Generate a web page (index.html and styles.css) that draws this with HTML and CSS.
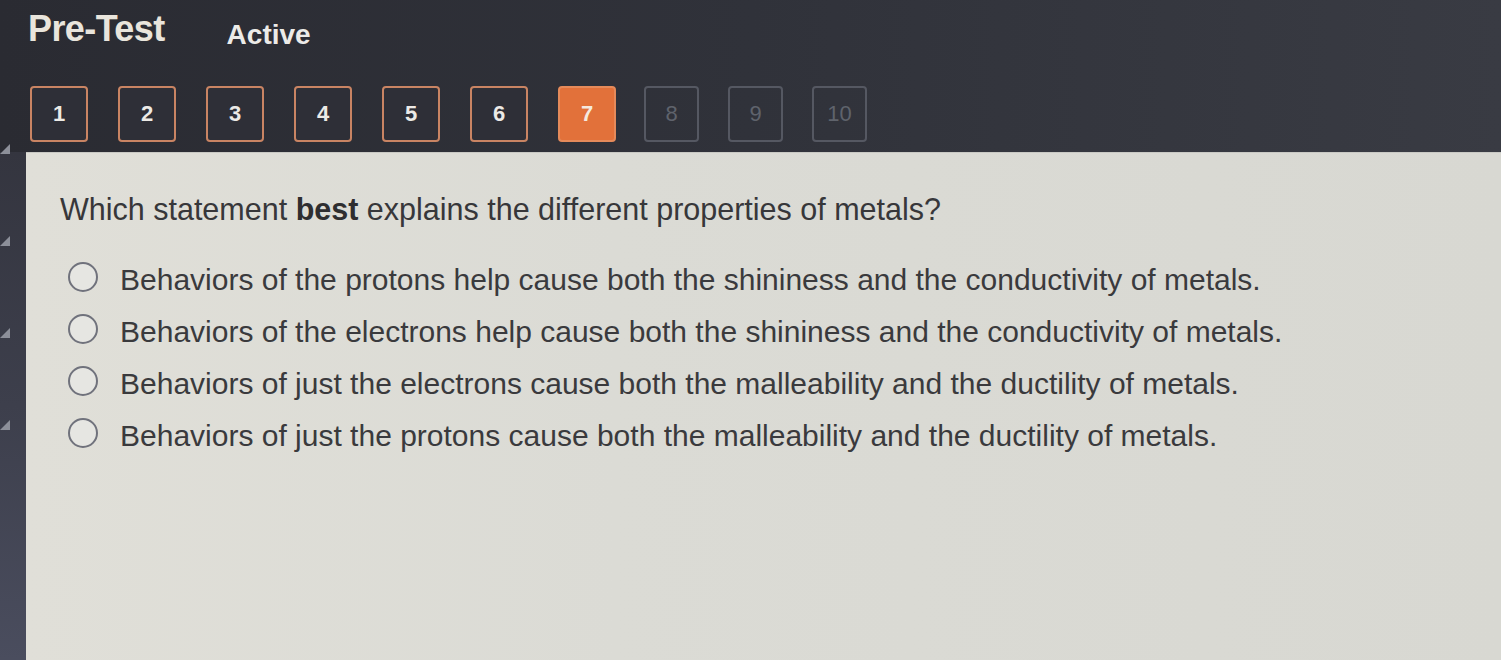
FILE: index.html
```html
<!DOCTYPE html>
<html lang="en">
<head>
<meta charset="utf-8">
<title>Pre-Test</title>
<link rel="stylesheet" href="styles.css">
</head>
<body>
<div class="page">
  <header class="header">
    <div class="title-row">
      <h1 class="title">Pre-Test</h1>
      <span class="status">Active</span>
    </div>
    <nav class="qnav">
      <span class="qbox done">1</span>
      <span class="qbox done">2</span>
      <span class="qbox done">3</span>
      <span class="qbox done">4</span>
      <span class="qbox done">5</span>
      <span class="qbox done">6</span>
      <span class="qbox current">7</span>
      <span class="qbox todo">8</span>
      <span class="qbox todo">9</span>
      <span class="qbox todo">10</span>
    </nav>
  </header>
  <div class="body-row">
    <aside class="rail">
      <span class="tick"></span>
      <span class="tick"></span>
      <span class="tick"></span>
      <span class="tick"></span>
    </aside>
    <main class="panel">
      <p class="question">Which statement <b>best</b> explains the different properties of metals?</p>
      <ul class="options">
        <li class="option"><span class="radio"></span><span>Behaviors of the protons help cause both the shininess and the conductivity of metals.</span></li>
        <li class="option"><span class="radio"></span><span>Behaviors of the electrons help cause both the shininess and the conductivity of metals.</span></li>
        <li class="option"><span class="radio"></span><span>Behaviors of just the electrons cause both the malleability and the ductility of metals.</span></li>
        <li class="option"><span class="radio"></span><span>Behaviors of just the protons cause both the malleability and the ductility of metals.</span></li>
      </ul>
    </main>
  </div>
</div>
</body>
</html>
```

FILE: styles.css
```css
html, body {
  margin: 0;
  padding: 0;
  height: 100%;
}
body {
  background: #2d2e36;
  font-family: "Liberation Sans", Arial, sans-serif;
  overflow: hidden;
}
.page {
  display: flex;
  flex-direction: column;
  height: 660px;
}
.header {
  height: 152px;
  box-sizing: border-box;
  padding: 8px 0 0 28px;
  background: linear-gradient(90deg, #2a2b32 0%, #30323a 50%, #393b43 100%);
  display: flex;
  flex-direction: column;
}
.title-row {
  display: flex;
  align-items: baseline;
  gap: 62px;
  height: 46px;
}
.title {
  margin: 0;
  font-size: 36px;
  font-weight: bold;
  color: #e9e5dc;
  letter-spacing: -0.6px;
}
.status {
  font-size: 28px;
  font-weight: bold;
  color: #ecebe8;
  position: relative;
  top: 3px;
}
.qnav {
  display: flex;
  gap: 30px;
  margin-top: 32px;
  padding-left: 2px;
}
.qbox {
  width: 58px;
  height: 56px;
  box-sizing: border-box;
  border: 2px solid #c98463;
  border-radius: 4px;
  display: flex;
  align-items: center;
  justify-content: center;
  font-size: 22px;
  font-weight: bold;
  color: #eceae6;
  background: #2e2f37;
}
.qbox.current {
  background: #e2713a;
  border-color: #e58a5a;
  color: #f5e9df;
}
.qbox.todo {
  border-color: #555862;
  color: #5f636c;
  font-weight: normal;
  width: 55px;
  background: transparent;
  margin-left: -2px;
}
.qbox.todo + .qbox.todo {
  margin-left: -1px;
}
.body-row {
  flex: 1;
  display: flex;
}
.rail {
  width: 26px;
  flex-shrink: 0;
  background: linear-gradient(180deg, #34353f 0%, #3d3f4c 50%, #4a4d5e 100%);
  display: flex;
  flex-direction: column;
  gap: 82px;
}
.tick {
  display: block;
  width: 0;
  height: 0;
  border-left: 10px solid transparent;
  border-bottom: 10px solid #8c8f99;
}
.tick:first-child {
  margin-top: -8px;
}
.panel {
  flex: 1;
  background: linear-gradient(90deg, #e0dfd8 0%, #dbdbd5 40%, #d8d8d2 100%);
  padding: 38px 0 0 42px;
  color: #3a3a3c;
  border-top: 1px solid #c9c9c4;
}
.question {
  margin: 0 0 0 -8px;
  font-size: 30.5px;
  line-height: 36px;
  color: #37373a;
}
.question b {
  color: #2e2e30;
}
.options {
  list-style: none;
  margin: 27px 0 0 0;
  padding: 0;
}
.option {
  display: flex;
  align-items: center;
  gap: 22px;
  height: 52px;
  font-size: 30px;
  color: #3a3a3d;
}
.radio {
  width: 30px;
  height: 30px;
  box-sizing: border-box;
  border: 2px solid #70727c;
  border-radius: 50%;
  background: #e6e6e2;
  flex-shrink: 0;
  margin-top: -6px;
}
```
